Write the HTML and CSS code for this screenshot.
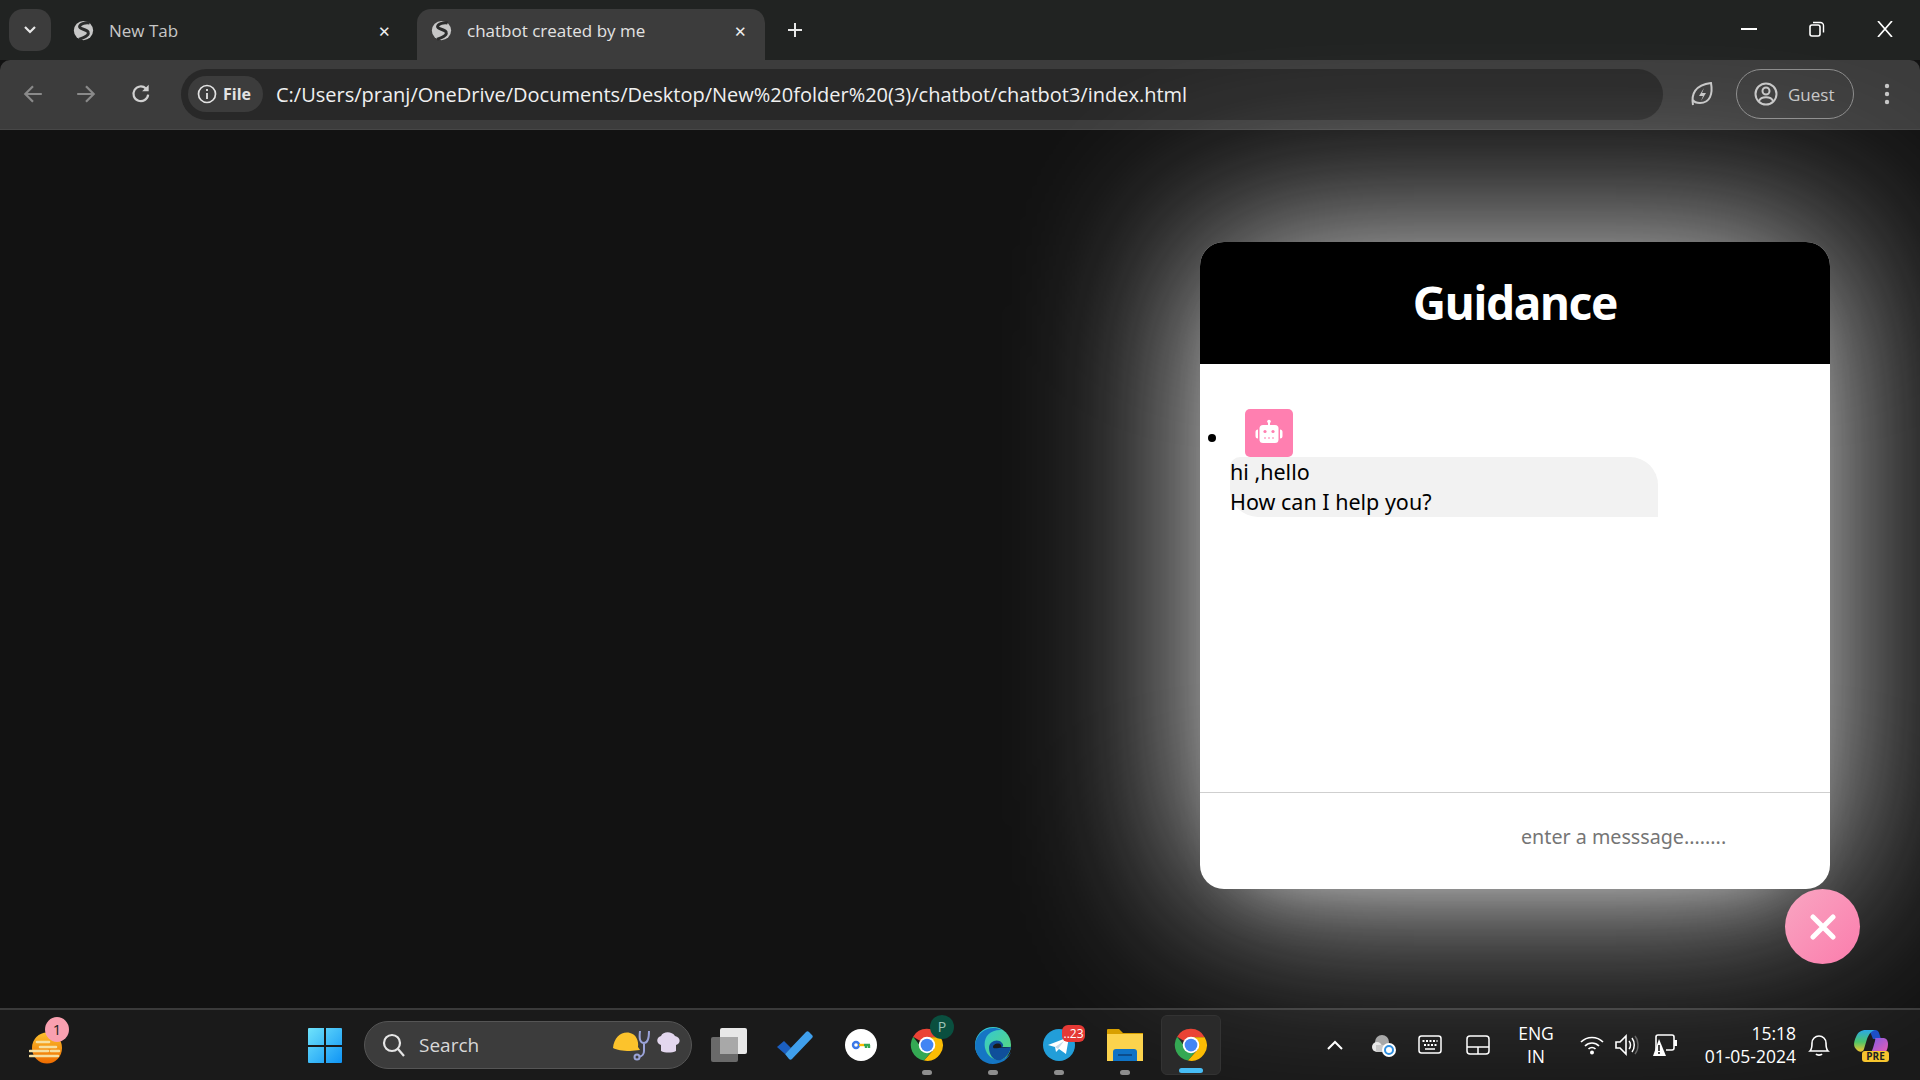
FILE: index.html
```html
<!DOCTYPE html>
<html lang="en">
<head>
    <meta charset="UTF-8">
    <title>chatbot created by me</title>
    <link rel="stylesheet" href="styles.css">
</head>
<body>
    <svg class="sprites" width="0" height="0">
        <symbol id="globe" viewBox="0 0 24 24">
            <circle cx="12" cy="12" r="11" fill="#c7c7c7"/>
            <path d="M19 3.500C15 2.500 8 4 7.500 7.500 7 11 17 10 17.500 14.500 18 18 12 20 7 22" fill="none" stroke="#2b2c2c" stroke-width="3.400"/>
        </symbol>
        <symbol id="chrome" viewBox="0 0 48 48">
            <path d="M24 24L5.500 13A21 21 0 0 1 42.200 13.500H24z" fill="#ea4335"/>
            <path d="M24 24l-10 0L5.500 13A21 21 0 0 0 20 44.800L29 34z" fill="#34a853"/>
            <path d="M24 13.500h18.200A21 21 0 0 1 20 44.800L33 30z" fill="#fbbc04"/>
            <circle cx="24" cy="24" r="11" fill="#fff"/>
            <circle cx="24" cy="24" r="8.500" fill="#4285f4"/>
        </symbol>
    </svg>

    <header class="tabstrip">
        <button class="tab-menu">
            <svg width="14" height="10" viewBox="0 0 14 10"><path d="M2 2l5 5 5-5" fill="none" stroke="#e8e8e8" stroke-width="2.200"/></svg>
        </button>
        <div class="tab">
            <svg class="favicon"><use href="#globe"/></svg>
            <span class="tab-title">New Tab</span>
            <span class="tab-close">✕</span>
        </div>
        <div class="tab tab-active">
            <svg class="favicon"><use href="#globe"/></svg>
            <span class="tab-title">chatbot created by me</span>
            <span class="tab-close">✕</span>
        </div>
        <span class="tab-new">
            <svg width="18" height="18" viewBox="0 0 18 18"><path d="M9 2v14M2 9h14" stroke="#e8e8e8" stroke-width="2"/></svg>
        </span>
        <div class="window-btns">
            <svg width="16" height="16" viewBox="0 0 16 16"><path d="M0 8h16" stroke="#fff" stroke-width="2"/></svg>
            <svg width="16" height="16" viewBox="0 0 16 16"><rect x="1" y="4" width="10" height="11" rx="2" fill="none" stroke="#fff" stroke-width="1.600"/><path d="M4 1.500h7a3 3 0 0 1 3.500 3v7" fill="none" stroke="#fff" stroke-width="1.400"/></svg>
            <svg width="16" height="16" viewBox="0 0 16 16"><path d="M1 0l14 16M15 0L1 16" stroke="#fff" stroke-width="1.700"/></svg>
        </div>
    </header>

    <nav class="toolbar">
        <svg class="nav-icon" viewBox="0 0 20 20"><path d="M18 10H3M10 3l-7 7 7 7" fill="none" stroke="#8a8a8a" stroke-width="2"/></svg>
        <svg class="nav-icon" viewBox="0 0 20 20"><path d="M2 10h15M10 3l7 7-7 7" fill="none" stroke="#8a8a8a" stroke-width="2"/></svg>
        <svg class="nav-icon nav-reload" viewBox="0 0 20 20"><path d="M16.500 10.500A6.700 6.700 0 1 1 14.500 5" fill="none" stroke="#d0d0d0" stroke-width="2"/><path d="M17 1.500v6h-6z" fill="#d0d0d0"/></svg>
        <div class="urlbar">
            <span class="file-chip">
                <svg width="20" height="20" viewBox="0 0 20 20"><circle cx="10" cy="10" r="8.500" fill="none" stroke="#e3e3e3" stroke-width="1.700"/><path d="M10 9v6M10 5v2" stroke="#e3e3e3" stroke-width="1.800"/></svg>
                File
            </span>
            <span class="url">C:/Users/pranj/OneDrive/Documents/Desktop/New%20folder%20(3)/chatbot/chatbot3/index.html</span>
        </div>
        <svg class="leaf" width="24" height="28" viewBox="0 0 24 28"><path d="M3 25C1 14 5 5 21 3c2 11-1 20-11 20-3 0-6-1-7-3" fill="none" stroke="#c7c7c7" stroke-width="2"/><path d="M14 8l-5 8h4l-2 5 5-8h-4z" fill="#c7c7c7"/></svg>
        <div class="guest">
            <svg width="24" height="26" viewBox="0 0 24 26"><circle cx="12" cy="13" r="10.500" fill="none" stroke="#c7c7c7" stroke-width="2"/><circle cx="12" cy="10" r="3.500" fill="none" stroke="#c7c7c7" stroke-width="2"/><path d="M5 20c2-5 12-5 14 0" fill="none" stroke="#c7c7c7" stroke-width="2"/></svg>
            Guest
        </div>
        <svg class="kebab" width="6" height="24" viewBox="0 0 6 24"><circle cx="3" cy="4" r="2.200" fill="#c7c7c7"/><circle cx="3" cy="12" r="2.200" fill="#c7c7c7"/><circle cx="3" cy="20" r="2.200" fill="#c7c7c7"/></svg>
    </nav>

    <main class="viewport">
        <section class="chatbot">
            <h1 class="chat-title">Guidance</h1>
            <ul class="chatbox">
                <li class="chat-msg">
                    <span class="bot-icon">
                        <svg width="30" height="30" viewBox="0 0 30 30">
                            <rect x="14" y="3" width="2" height="4" fill="#fff"/>
                            <circle cx="15" cy="3.500" r="1.800" fill="#fff"/>
                            <rect x="5.500" y="7" width="19" height="18" rx="3.500" fill="#fff"/>
                            <path d="M4 11.500v9A2.500 2.500 0 0 1 1.500 18v-4A2.500 2.500 0 0 1 4 11.500zM26 11.500v9a2.500 2.500 0 0 0 2.500-2.500v-4a2.500 2.500 0 0 0-2.500-2.500z" fill="#fff"/>
                            <circle cx="11" cy="13.500" r="1.600" fill="#ff7fb0"/>
                            <circle cx="19" cy="13.500" r="1.600" fill="#ff7fb0"/>
                            <path d="M10 20h10" stroke="#ff7fb0" stroke-width="1" stroke-dasharray="2 2"/>
                        </svg>
                    </span>
                    <p class="bubble">hi ,hello<br>How can I help you?</p>
                </li>
            </ul>
            <div class="chat-input">
                <input class="msg-field" type="text" placeholder="enter a messsage........">
            </div>
            <button class="chat-toggle">
                <svg width="26" height="26" viewBox="0 0 26 26"><path d="M3 3l20 20M23 3L3 23" stroke="#fff" stroke-width="5" stroke-linecap="round"/></svg>
            </button>
        </section>
    </main>

    <footer class="taskbar">
        <div class="weather">
            <svg width="34" height="32" viewBox="0 0 34 32">
                <defs><linearGradient id="sun" x1="0" y1="0" x2="0" y2="1"><stop offset="0" stop-color="#fbc02d"/><stop offset="1" stop-color="#ef6c00"/></linearGradient></defs>
                <ellipse cx="18" cy="16" rx="15" ry="15.500" fill="url(#sun)"/>
                <path d="M8 10h12M11 15h16M1 19h18M22 19h8M1 24h28" stroke="#f6dfa0" stroke-width="2.600" stroke-linecap="round"/>
            </svg>
            <span class="notify-badge">1</span>
        </div>
        <svg class="start" width="34" height="35" viewBox="0 0 34 35">
            <defs><linearGradient id="win" x1="0" y1="0" x2="1" y2="1"><stop offset="0" stop-color="#6fe3fb"/><stop offset="1" stop-color="#0f94f5"/></linearGradient></defs>
            <path d="M0 1a1 1 0 0 1 1-1h15v17H0zM18 0h15a1 1 0 0 1 1 1v16H18zM0 19h16v16H1a1 1 0 0 1-1-1zM18 19h16v15a1 1 0 0 1-1 1H18z" fill="url(#win)"/>
        </svg>
        <div class="search">
            <svg width="24" height="26" viewBox="0 0 24 26"><circle cx="10" cy="11" r="8" fill="none" stroke="#e6e6e6" stroke-width="2.200"/><path d="M16 17l6 7" stroke="#e6e6e6" stroke-width="2.200"/></svg>
            <span class="search-text">Search</span>
            <svg class="search-art" width="72" height="32" viewBox="0 0 72 32">
                <path d="M1 19C2 8 10 2 18 4c6 1 9 8 8 14l2 3-10 1C10 22 5 21 1 19z" fill="#fcc32c"/>
                <path d="M28 2c-1 8 0 12 4 12s5-6 5-12M32 14v8c0 4-2 5-5 6" fill="none" stroke="#9aa3d8" stroke-width="2"/>
                <circle cx="25" cy="28" r="2.500" fill="none" stroke="#9aa3d8" stroke-width="2"/>
                <path d="M49 16c-5-1-5-8 0-9 2-5 11-5 14 0 6 1 6 8 1 9v6c-4 2-11 2-15 0z" fill="#e3d7ee"/>
            </svg>
        </div>
        <div class="pinned">
            <span class="pin">
                <svg width="36" height="34" viewBox="0 0 36 34"><rect x="9" y="0" width="27" height="26" rx="2" fill="#e8e8e8"/><rect x="0" y="9" width="27" height="25" rx="2" fill="#6a6a6a"/><rect x="9" y="9" width="18" height="17" fill="#a8a8a8"/></svg>
            </span>
            <span class="pin">
                <svg width="36" height="30" viewBox="0 0 36 30"><path d="M0 17l7-6 7 7-6 6z" fill="#1b5fc1"/><path d="M8 24L29 2c1-1 2-1 3 0l3 3c1 1 1 2 0 3L15 29c-1 1-2 1-3 0z" fill="#3f9fec"/></svg>
            </span>
            <span class="pin">
                <svg width="32" height="32" viewBox="0 0 32 32"><circle cx="16" cy="16" r="16" fill="#fff"/><circle cx="11" cy="16" r="3" fill="none" stroke="#3b78e7" stroke-width="2.400"/><path d="M14 16h5" stroke="#fbbc04" stroke-width="2.400"/><path d="M19 16h6M21 16v3M24 16v3" stroke="#34a853" stroke-width="2.400"/></svg>
            </span>
            <span class="pin pin-open">
                <svg width="36" height="38"><use href="#chrome"/></svg>
                <span class="profile-badge">P</span>
            </span>
            <span class="pin pin-open">
                <svg width="36" height="38" viewBox="0 0 36 38">
                    <defs><linearGradient id="edge" x1="0" y1="0" x2="1" y2="1"><stop offset="0" stop-color="#2cc4e8"/><stop offset="1" stop-color="#5fdc6a"/></linearGradient></defs>
                    <circle cx="18" cy="19" r="18" fill="url(#edge)"/>
                    <path d="M0 19C1 6 15-2 27 4 14 3 8 12 10 22c2 9 11 14 18 11 4-2 6-3 8-7-2 7-10 12-18 12C8 38 0 30 0 19z" fill="#1576c4"/>
                    <path d="M14 22c0-7 9-10 13-5 2 2 1 4 0 4h9c-1 6-5 11-10 13-7 2-12-5-12-12z" fill="#0f4f9a"/>
                    <path d="M18 21c0-3 6-5 8-2 1 2 0 3-1 3l11-1-3 0c-4 0-7 0-9 1-3 0-6 1-6-1z" fill="#1a1a1a"/>
                </svg>
            </span>
            <span class="pin pin-open">
                <svg width="32" height="32" viewBox="0 0 32 32"><circle cx="16" cy="16" r="16" fill="#229ed9"/><path d="M5 16l21-8-3 17-7-5-3 3-1-5z" fill="#fff"/><path d="M12 18l9-6-6 8z" fill="#c8daea"/></svg>
                <span class="tg-badge">..23</span>
            </span>
            <span class="pin pin-open">
                <svg width="36" height="32" viewBox="0 0 36 32">
                    <path d="M0 1a1 1 0 0 1 1-1h11l4 4h20v6H0z" fill="#d8a000"/>
                    <path d="M0 5h36v27H0z" fill="#fcd34d"/>
                    <path d="M6 32V23a3 3 0 0 1 3-3h18a3 3 0 0 1 3 3v9z" fill="#0f73c6"/>
                    <path d="M11 26h14" stroke="#0b4d8c" stroke-width="2"/>
                </svg>
            </span>
            <span class="pin pin-active">
                <svg width="36" height="38"><use href="#chrome"/></svg>
            </span>
        </div>
        <div class="tray">
            <svg class="tray-icon tray-chevron" width="18" height="12" viewBox="0 0 18 12"><path d="M2 10l7-7 7 7" fill="none" stroke="#fff" stroke-width="2"/></svg>
            <svg class="tray-icon tray-cloud" width="26" height="24" viewBox="0 0 26 24"><circle cx="11" cy="9" r="7" fill="#a8a8a8"/><circle cx="6" cy="14" r="5" fill="#e8e8e8"/><rect x="5" y="12" width="14" height="7" fill="#c8c8c8"/><circle cx="18" cy="17" r="7" fill="#fff"/><circle cx="18" cy="17" r="4" fill="none" stroke="#2f8fe0" stroke-width="2"/></svg>
            <svg class="tray-icon" width="24" height="20" viewBox="0 0 24 20"><rect x="1" y="1" width="22" height="17" rx="2.500" fill="none" stroke="#fff" stroke-width="1.500"/><path d="M4.500 6h15M6 10h13" stroke="#fff" stroke-width="2" stroke-dasharray="2 1.500"/><path d="M7 14h10" stroke="#fff" stroke-width="1.500"/></svg>
            <svg class="tray-icon tray-pad" width="24" height="20" viewBox="0 0 24 20"><rect x="1" y="1" width="22" height="18" rx="3" fill="none" stroke="#fff" stroke-width="1.500"/><path d="M1 12h22M12 12v7" stroke="#fff" stroke-width="1.500"/></svg>
            <div class="lang">ENG<br>IN</div>
            <svg class="tray-icon tray-wifi" width="24" height="20" viewBox="0 0 24 20"><path d="M1 7c6-6 16-6 22 0M5 11c4-4 10-4 14 0M8.500 14c2-2 5-2 7 0" fill="none" stroke="#fff" stroke-width="1.700"/><circle cx="12" cy="17.500" r="2" fill="#fff"/></svg>
            <svg class="tray-icon tray-sound" width="24" height="22" viewBox="0 0 24 22"><path d="M1 8h4l6-6v18l-6-6H1z" fill="none" stroke="#fff" stroke-width="1.600"/><path d="M14 7c2 2 2 6 0 8M17 4c3 4 3 10 0 14" fill="none" stroke="#fff" stroke-width="1.500"/><path d="M20 2c4 5 4 13 0 18" fill="none" stroke="#666" stroke-width="1.400"/></svg>
            <svg class="tray-icon tray-battery" width="26" height="24" viewBox="0 0 26 24"><path d="M4 17V4a2 2 0 0 1 2-2h14a2 2 0 0 1 2 2v11a2 2 0 0 1-2 2h-6" fill="none" stroke="#fff" stroke-width="1.600"/><rect x="22" y="7" width="3" height="6" fill="#fff"/><path d="M7 6L1 23h13z" fill="#fff"/><path d="M7 12v6M7 19v2" stroke="#1a1a1a" stroke-width="1.600"/></svg>
            <div class="clock">15:18<br>01-05-2024</div>
            <svg class="tray-icon" width="22" height="24" viewBox="0 0 22 24"><path d="M2 18c2-2 2-4 2-8a7 7 0 0 1 14 0c0 4 0 6 2 8z" fill="none" stroke="#fff" stroke-width="1.600"/><path d="M8 21c1 1.500 5 1.500 6 0" fill="none" stroke="#fff" stroke-width="1.600"/></svg>
            <svg class="copilot" width="36" height="26" viewBox="0 0 36 26">
                <defs>
                    <linearGradient id="cp1" x1="0" y1="0" x2="0" y2="1"><stop offset="0" stop-color="#2aa8e8"/><stop offset=".55" stop-color="#4cc56a"/><stop offset="1" stop-color="#f2c52e"/></linearGradient>
                    <linearGradient id="cp2" x1="0" y1="0" x2="1" y2="1"><stop offset="0" stop-color="#7a5ce8"/><stop offset="1" stop-color="#ee5cb0"/></linearGradient>
                </defs>
                <path d="M13 1h9c3 0 4 2 5 6l1 3h-8l-2-5c-.5-2-3-3-5-4z" fill="#1c4fc4"/>
                <path d="M3 20C0 17 1 12 3 8 5 3 8 1 13 1h9c-4 1-6 4-8 9l-3 10c-1 4-6 3-8 0z" fill="url(#cp1)"/>
                <path d="M22 9h8c3 0 5 2 5 6 0 5-2 10-7 10H16c2-1 3-3 4-6l2-7c.3-1.500.5-3 0-3z" fill="url(#cp2)"/>
            </svg>
            <span class="pre-tag">PRE</span>
        </div>
    </footer>
</body>
</html>
```

FILE: styles.css
```css
* {
    box-sizing: border-box;
}

html, body {
    margin: 0;
    height: 100%;
}

body {
    display: flex;
    flex-direction: column;
    height: 1080px;
    overflow: hidden;
    background-color: #121212;
    font-family: "Open Sans", "Noto Sans", sans-serif;
    color: #e3e3e3;
}

.sprites {
    position: absolute;
}

/* tabs */
.tabstrip {
    display: flex;
    align-items: flex-end;
    height: 60px;
    padding-left: 9px;
    background-color: #212322;
}

.tab-menu {
    align-self: flex-start;
    display: flex;
    align-items: center;
    justify-content: center;
    width: 42px;
    height: 42px;
    margin-top: 9px;
    border: 0;
    border-radius: 14px;
    background-color: #3c3c3c;
}

.tab {
    display: flex;
    align-items: center;
    width: 358px;
    height: 51px;
    padding: 0 18px 8px 22px;
    font-size: 17px;
    color: #c7c7c7;
}

.tab-active {
    width: 348px;
    margin-left: 8px;
    padding-left: 14px;
    background-color: #3c3c3c;
    border-radius: 14px 14px 0 0;
    color: #e3e3e3;
}

.favicon {
    width: 21px;
    height: 23px;
    flex: none;
}

.tab-title {
    flex: 1;
    margin-left: 15px;
}

.tab-close {
    font-size: 15px;
    color: #eee;
}

.tab-new {
    align-self: flex-start;
    margin: 21px 0 0 21px;
}

.window-btns {
    align-self: flex-start;
    display: flex;
    gap: 52px;
    margin: 21px 27px 0 auto;
}

/* toolbar */
.toolbar {
    display: flex;
    align-items: center;
    height: 70px;
    padding-bottom: 1px;
    background-color: #3c3c3c;
    border-bottom: 1px solid #474747;
    border-radius: 10px 10px 0 0;
}

.nav-icon {
    width: 22px;
    height: 22px;
    flex: none;
    margin-left: 22px;
    margin-right: 9px;
}

.nav-reload {
    margin-left: 24px;
}

.urlbar {
    display: flex;
    align-items: center;
    width: 1482px;
    height: 51px;
    margin-left: 20px;
    padding-left: 7px;
    background-color: #282828;
    border-radius: 26px;
}

.file-chip {
    display: flex;
    align-items: center;
    gap: 6px;
    width: 75px;
    height: 36px;
    padding-left: 9px;
    background-color: #3c3c3c;
    border-radius: 18px;
    font-size: 16px;
    font-weight: 700;
}

.url {
    margin-left: 13px;
    font-size: 20px;
    white-space: nowrap;
    color: #f0f0f0;
}

.leaf {
    margin-left: 27px;
}

.guest {
    display: flex;
    align-items: center;
    gap: 10px;
    width: 118px;
    height: 50px;
    margin-left: 22px;
    padding-left: 17px;
    border: 1px solid #8c8c8c;
    border-radius: 25px;
    font-size: 17px;
    color: #c7c7c7;
}

.kebab {
    margin-left: 30px;
}

/* page */
.viewport {
    flex: 1;
    display: flex;
    justify-content: flex-end;
    padding: 112px 90px 0 0;
    background-color: #121212;
}

.chatbot {
    position: relative;
    display: flex;
    flex-direction: column;
    width: 630px;
    height: 647px;
    background-color: #fff;
    border-radius: 24px;
    box-shadow: 0 0 180px 0 rgba(255, 255, 255, .88), 0 32px 64px -48px rgba(255, 255, 255, .5);
    font-family: "Noto Sans", sans-serif;
    color: #000;
}

.chat-title {
    display: flex;
    align-items: center;
    justify-content: center;
    height: 122px;
    margin: 0;
    padding-bottom: 2px;
    background-color: #000;
    border-radius: 24px 24px 0 0;
    font-size: 46px;
    letter-spacing: -1.300px;
    color: #fff;
}

.chatbox {
    flex: 1;
    margin: 0;
    padding: 45px 0 0 30px;
    list-style: disc;
}

.chat-msg {
    font-size: 21.500px;
}

.bot-icon {
    display: inline-flex;
    align-items: center;
    justify-content: center;
    width: 48px;
    height: 48px;
    margin-left: 15px;
    background-color: #ff7fb0;
    border-radius: 5px;
    vertical-align: -3px;
}

.bubble {
    width: 428px;
    height: 60px;
    margin: 0;
    background-color: #f2f2f2;
    border-radius: 10px 28px 0 28px;
    line-height: 30px;
    white-space: nowrap;
}

.chat-input {
    display: flex;
    align-items: center;
    height: 97px;
    padding-left: 321px;
    border-top: 1px solid #cfcfcf;
}

.msg-field {
    width: 280px;
    padding: 0 0 10px;
    border: 0;
    outline: 0;
    background: transparent;
    font-family: "Noto Sans", sans-serif;
    font-size: 19.700px;
}

.msg-field::placeholder {
    color: #757575;
    opacity: 1;
}

.chat-toggle {
    position: absolute;
    right: -30px;
    bottom: -75px;
    display: flex;
    align-items: center;
    justify-content: center;
    width: 75px;
    height: 75px;
    padding: 0;
    border: 0;
    border-radius: 50%;
    background: linear-gradient(135deg, #f9a6c2, #fb7cac);
}

/* taskbar */
.taskbar {
    display: flex;
    align-items: center;
    height: 72px;
    background-color: #1a1a1a;
    border-top: 2px solid #3a3a3a;
}

.weather {
    position: relative;
    display: flex;
    margin-left: 29px;
    padding-top: 6px;
}

.notify-badge {
    position: absolute;
    top: -9px;
    right: -6px;
    width: 24px;
    height: 25px;
    background-color: #f9a0b0;
    border-radius: 50%;
    text-align: center;
    font-size: 15px;
    line-height: 25px;
    color: #222;
}

.start {
    margin-left: 245px;
}

.search {
    display: flex;
    align-items: center;
    width: 328px;
    height: 48px;
    margin-left: 22px;
    padding-left: 17px;
    background-color: #3c3c3c;
    border: 1px solid #555;
    border-radius: 24px;
}

.search-text {
    margin-left: 13px;
    font-size: 19px;
    color: #d8d8d8;
}

.search-art {
    margin-left: auto;
    margin-right: 7px;
}

.pinned {
    display: flex;
    margin-left: 4px;
}

.pin {
    position: relative;
    display: flex;
    align-items: center;
    justify-content: center;
    width: 66px;
    height: 60px;
}

.pin-open::after {
    content: "";
    position: absolute;
    bottom: 0;
    left: 28px;
    width: 10px;
    height: 5px;
    background-color: #8e8e8e;
    border-radius: 3px;
}

.pin-active {
    width: 60px;
    margin-left: 3px;
    background-color: #2a2a2a;
    border: 1px solid #333;
    border-radius: 6px;
}

.pin-active::after {
    content: "";
    position: absolute;
    bottom: 1px;
    left: 17px;
    width: 24px;
    height: 5px;
    background-color: #47bdf5;
    border-radius: 3px;
}

.profile-badge {
    position: absolute;
    top: 0;
    left: 36px;
    width: 24px;
    height: 24px;
    background-color: #0a4f3f;
    border-radius: 50%;
    text-align: center;
    font-size: 14px;
    line-height: 24px;
    color: #9fc4b8;
}

.tg-badge {
    position: absolute;
    top: 10px;
    left: 36px;
    width: 23px;
    height: 17px;
    background-color: #e53935;
    border-radius: 6px;
    text-align: center;
    font-size: 12px;
    line-height: 17px;
    color: #fff;
}

.tray {
    position: relative;
    display: flex;
    align-items: center;
    margin-left: 105px;
    font-size: 17.500px;
    color: #fff;
}

.tray-icon {
    margin-right: 24px;
}

.tray-chevron {
    margin-right: 27px;
}

.tray-cloud {
    margin-right: 21px;
}

.tray-pad {
    margin-right: 21px;
}

.lang {
    width: 50px;
    margin-right: 19px;
    text-align: center;
    line-height: 23px;
}

.tray-wifi {
    margin-right: 11px;
}

.tray-sound {
    margin-right: 13px;
}

.tray-battery {
    margin-right: 8px;
}

.clock {
    width: 112px;
    margin-left: -2px;
    text-align: right;
    line-height: 23px;
    white-space: nowrap;
}

.clock + .tray-icon {
    margin: 0 0 0 12px;
}

.copilot {
    margin: -6px 0 0 23px;
}

.pre-tag {
    position: absolute;
    right: 0;
    bottom: 6px;
    width: 27px;
    height: 11px;
    background-color: #f7c52e;
    border-radius: 3px;
    text-align: center;
    font-size: 10px;
    font-weight: 700;
    line-height: 11px;
    color: #222;
}
```
